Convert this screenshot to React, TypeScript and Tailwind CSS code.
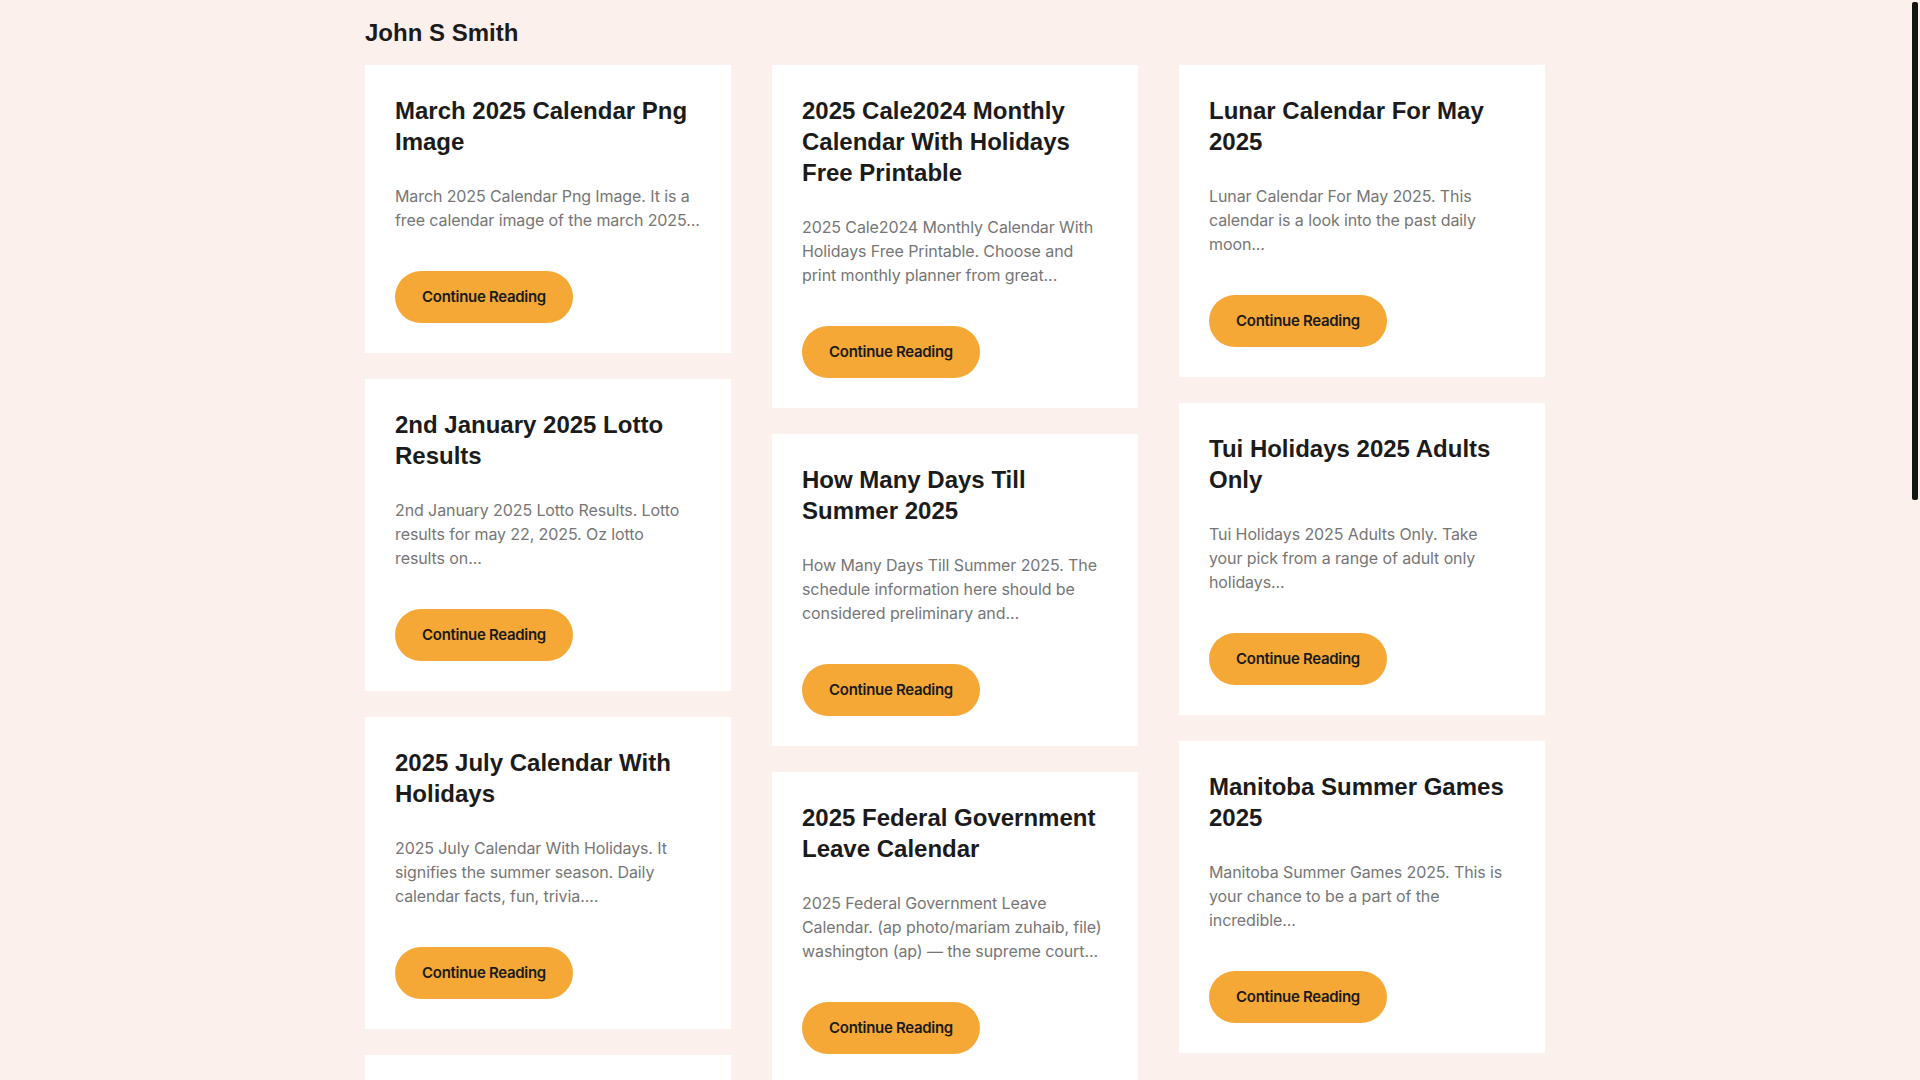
import React from "react";

type Post = { title: string; excerpt: string };

const col1: Post[] = [
  {
    title: "March 2025 Calendar Png Image",
    excerpt: "March 2025 Calendar Png Image. It is a free calendar image of the march 2025...",
  },
  {
    title: "2nd January 2025 Lotto Results",
    excerpt: "2nd January 2025 Lotto Results. Lotto results for may 22, 2025. Oz lotto results\u00a0on...",
  },
  {
    title: "2025 July Calendar With Holidays",
    excerpt: "2025 July Calendar With Holidays. It signifies the summer season. Daily calendar facts, fun, trivia....",
  },
  {
    title: "2025 Calendar Printable Free",
    excerpt: "2025 Calendar Printable Free. Download your free printable calendar for the whole year...",
  },
];

const col2: Post[] = [
  {
    title: "2025 Cale2024 Monthly Calendar With Holidays Free Printable",
    excerpt: "2025 Cale2024 Monthly Calendar With Holidays Free Printable. Choose and print monthly planner from great...",
  },
  {
    title: "How Many Days Till Summer 2025",
    excerpt: "How Many Days Till Summer 2025. The schedule information here should be considered preliminary and...",
  },
  {
    title: "2025 Federal Government Leave Calendar",
    excerpt: "2025 Federal Government Leave Calendar. (ap photo/mariam zuhaib, file) washington (ap) \u2014 the supreme court...",
  },
];

const col3: Post[] = [
  {
    title: "Lunar Calendar For May 2025",
    excerpt: "Lunar Calendar For May 2025. This calendar is a look into the past daily moon...",
  },
  {
    title: "Tui Holidays 2025 Adults Only",
    excerpt: "Tui Holidays 2025 Adults Only. Take your pick from a range of adult only holidays...",
  },
  {
    title: "Manitoba Summer Games 2025",
    excerpt: "Manitoba Summer Games 2025. This is your chance to be a part of the incredible...",
  },
];

function Card({ post }: { post: Post }) {
  return (
    <article className="bg-white p-[30px]">
      <h2 className="font-['Liberation_Sans',Arial,sans-serif] text-[24px] leading-[31px] font-bold text-[#1b1b1b]">
        {post.title}
      </h2>
      <p className="mt-[27px] font-[Inter,sans-serif] text-[16px] leading-[24px] tracking-[-0.1px] text-[#767676]">
        {post.excerpt}
      </p>
      <div className="mt-[39px]">
        <a
          href="#"
          className="inline-flex h-[52px] w-[178px] items-center justify-center rounded-full bg-[#f5a836] font-[Inter,sans-serif] text-[15px] font-semibold tracking-[-0.3px] text-[#1a1a1a]"
        >
          Continue Reading
        </a>
      </div>
    </article>
  );
}

function Column({ posts }: { posts: Post[] }) {
  return (
    <div className="flex w-[366px] flex-col gap-[26px]">
      {posts.map((p) => (
        <Card key={p.title} post={p} />
      ))}
    </div>
  );
}

export default function App() {
  return (
    <div className="relative h-screen w-full overflow-hidden bg-[#fbf0eb]">
      <div className="w-[1910px]">
        <div className="mx-auto w-[1180px]">
          <header className="h-[65px] pt-[19px]">
            <h1 className="font-['Liberation_Sans',Arial,sans-serif] text-[24px] leading-[28px] font-bold text-[#1b1b1b]">
              John S Smith
            </h1>
          </header>
          <main className="flex items-start gap-[41px]">
            <Column posts={col1} />
            <Column posts={col2} />
            <Column posts={col3} />
          </main>
        </div>
      </div>
      <div className="absolute right-0 top-0 h-full w-[10px] bg-[#fbf0eb]">
        <div className="mx-auto mt-[2px] h-[498px] w-[6px] rounded-[2px] bg-[#141414]" />
      </div>
    </div>
  );
}
